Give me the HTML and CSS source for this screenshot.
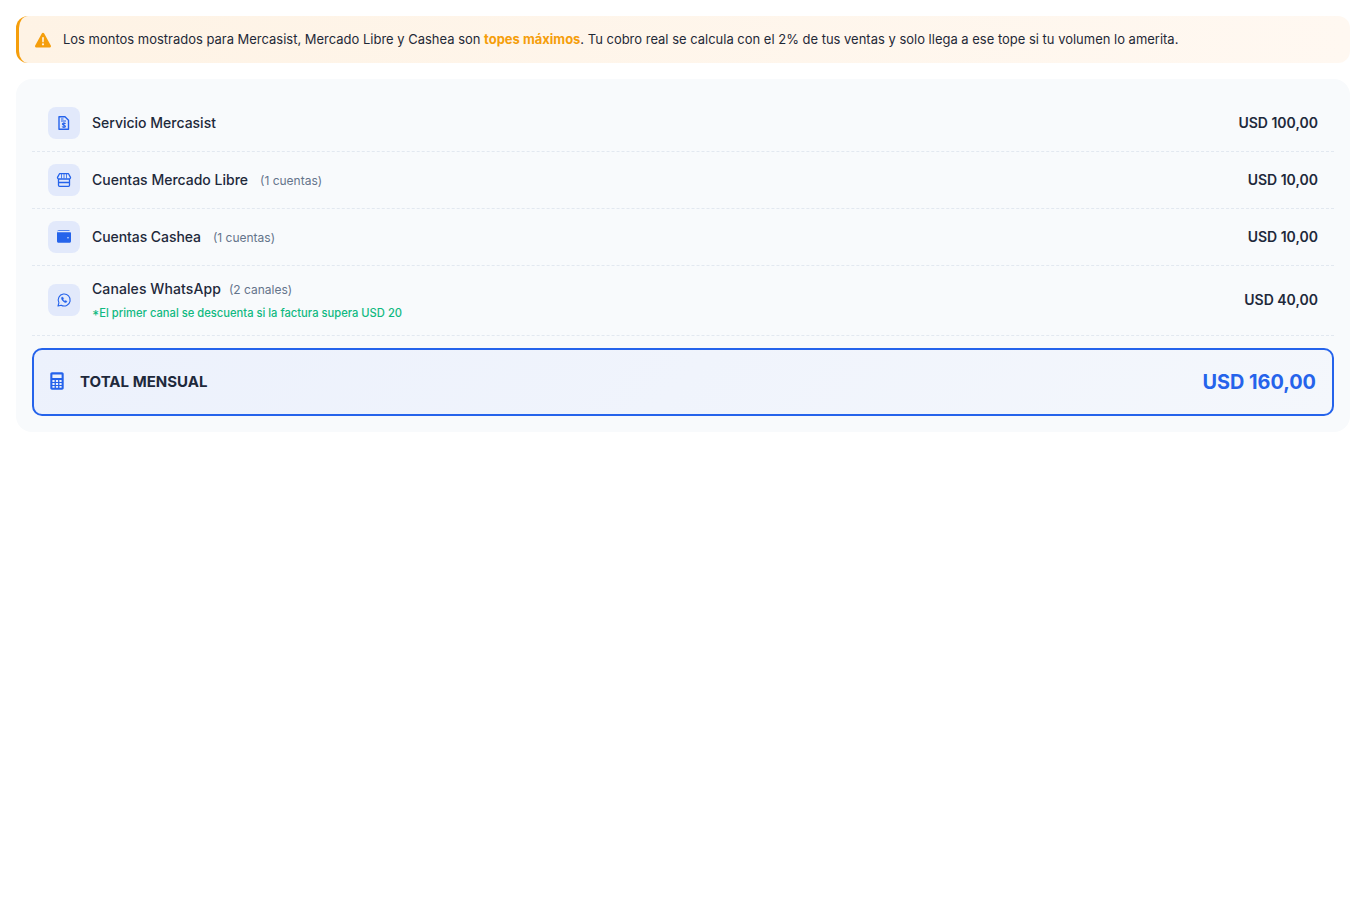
FILE: index.html
```html
<!DOCTYPE html>
<html lang="es">
<head>
<meta charset="utf-8">
<title>Resumen mensual</title>
<link rel="stylesheet" href="styles.css">
</head>
<body>
<div class="alert">
  <svg class="alert-icon" viewBox="0 0 16 16" aria-hidden="true"><path fill-rule="evenodd" d="M8 .8c.5 0 1 .3 1.200.7l6.600 12c.5.9-.1 1.900-1.200 1.900H1.400C.3 15.400-.3 14.400.2 13.500l6.600-12C7 1.100 7.500.8 8 .8zM7.100 5.300l.2 5h1.400l.2-5H7.100zM8 11.200a1.100 1.100 0 1 0 0 2.200 1.100 1.100 0 0 0 0-2.200z"/></svg>
  <p class="alert-text">Los montos mostrados para Mercasist, Mercado Libre y Cashea son <strong>topes máximos</strong>. Tu cobro real se calcula con el 2% de tus ventas y solo llega a ese tope si tu volumen lo amerita.</p>
</div>
<section class="card">
  <div class="row">
    <div class="row-left">
      <span class="icon-box"><svg viewBox="0 0 16 16" fill="none" stroke="currentColor" stroke-width="1.400"><path d="M3 1.700h6l3.500 3.500v9.100H3z" stroke-linejoin="round"/><path d="M5 4h2.500M5 6h5" stroke-width="1"/><path d="M9.600 8.800c-.3-.5-.9-.7-1.700-.7-.9 0-1.500.4-1.500 1s.6.900 1.500 1.100 1.600.5 1.600 1.100-.6 1-1.600 1c-.9 0-1.500-.3-1.800-.8M7.900 7.200v5.900" stroke-width="1.100"/></svg></span>
      <span class="name">Servicio Mercasist</span>
    </div>
    <span class="amount">USD 100,00</span>
  </div>
  <div class="row">
    <div class="row-left">
      <span class="icon-box"><svg viewBox="0 0 16 16" fill="none" stroke="currentColor" stroke-width="1.300" stroke-linejoin="round"><path d="M3.500 1.700h9l2 3.700c0 1-.8 1.600-1.700 1.600H3.200c-.9 0-1.700-.6-1.700-1.600z"/><path d="M5.500 2v4.500M8 2v4.500M10.500 2v4.500" stroke-width=".8"/><path d="M2.500 7v6.300c0 .6.400 1 1 1h9c.6 0 1-.4 1-1V7M2.500 10.500h11"/></svg></span>
      <span class="name">Cuentas Mercado Libre</span><span class="count">(1 cuentas)</span>
    </div>
    <span class="amount">USD 10,00</span>
  </div>
  <div class="row">
    <div class="row-left">
      <span class="icon-box"><svg viewBox="0 0 16 16" fill="currentColor"><path d="M2.800 1.200h10c.6 0 1 .3 1.100.9H2.500c-.9 0-1.500.5-1.500 1 0-1.100.7-1.900 1.800-1.900z"/><path fill-rule="evenodd" d="M1 3.200h13c.6 0 1 .4 1 1v8c0 .9-.6 1.500-1.500 1.500h-11c-.9 0-1.500-.6-1.500-1.500zM12 8a.8.800 0 1 0 0 1.600A.8.800 0 0 0 12 8z"/></svg></span>
      <span class="name name-tight">Cuentas Cashea</span><span class="count">(1 cuentas)</span>
    </div>
    <span class="amount">USD 10,00</span>
  </div>
  <div class="row row-tall">
    <div class="row-left">
      <span class="icon-box"><svg viewBox="0 0 16 16" fill="none" stroke="currentColor" stroke-width="1.100"><path d="M2 14l.9-3.200A6 6 0 1 1 5.200 13.200z" stroke-linejoin="round"/><path d="M5.800 5.300c-.5.500-.5 1.300 0 2.200.6 1.200 1.500 2.100 2.700 2.700.9.400 1.700.4 2.200-.1l.3-.7-1.500-.8-.6.600c-.8-.3-1.500-1-1.900-1.900l.6-.6-.7-1.500z" stroke-width=".5" fill="currentColor"/></svg></span>
      <div class="stack">
        <div class="stack-top"><span class="name name-wide">Canales WhatsApp</span><span class="count count-near">(2 canales)</span></div>
        <div class="note">*El primer canal se descuenta si la factura supera USD 20</div>
      </div>
    </div>
    <span class="amount">USD 40,00</span>
  </div>
  <div class="total">
    <div class="total-left">
      <svg class="total-icon" viewBox="0 0 14 18" aria-hidden="true"><path fill="currentColor" fill-rule="evenodd" d="M2 .3h10c1 0 1.700.7 1.700 1.700v14c0 1-.7 1.700-1.700 1.700H2c-1 0-1.700-.7-1.700-1.700V2C.3 1 1 .3 2 .3zM2.400 2.400v3.700h9.200V2.400zM2.400 7.900v2h2.200v-2zm3.500 0v2h2.200v-2zm3.500 0v2h2.200v-2zM2.400 11.100v1.800h2.200v-1.800zm3.500 0v1.800h2.200v-1.800zm3.500 0v1.800h2.200v-1.800zM2.400 14v1.700h2.200V14zm3.500 0v1.700h2.200V14zm3.500 0v1.700h2.200V14z"/></svg>
      <span class="total-label">TOTAL MENSUAL</span>
    </div>
    <span class="total-amount">USD 160,00</span>
  </div>
</section>
</body>
</html>
```
FILE: styles.css
```css
* { box-sizing: border-box; }
html, body { margin: 0; padding: 0; background: #fff; }
body { padding: 16px; font-family: Inter, "Liberation Sans", sans-serif; color: #1f2937; }

.alert {
  display: flex;
  align-items: center;
  gap: 12px;
  height: 47px;
  padding: 0 16px;
  border-left: 3px solid #f59e0b;
  border-radius: 12px;
  background: linear-gradient(90deg, #fef3e5, #fff8f1);
}
.alert-icon { width: 16px; height: 16px; fill: #f59e0b; flex: none; }
.alert-text { margin: 0; padding-bottom: 2px; font-size: 12.96px; letter-spacing: .01px; line-height: 20px; color: #1f2937; }
.alert-text strong { color: #f59e0b; font-weight: 700; }

.card {
  margin-top: 16px;
  padding: 16px;
  background: #f8fafc;
  border-radius: 16px;
}
.row {
  display: flex;
  align-items: center;
  justify-content: space-between;
  padding: 12px 16px;
  border-bottom: 1px dashed #e2e8f0;
}
.row-tall { padding-bottom: 13px; }
.row-left { display: flex; align-items: center; gap: 12px; }
.icon-box {
  display: flex;
  align-items: center;
  justify-content: center;
  width: 32px;
  height: 32px;
  border-radius: 8px;
  background: #e2e9fb;
  color: #2563eb;
  flex: none;
}
.icon-box svg { width: 16px; height: 16px; }
.name { font-size: 14px; line-height: 20px; font-weight: 500; color: #1e293b; }
.name-tight { letter-spacing: -.07px; }
.name-wide { letter-spacing: .09px; }
.count { padding-top: 2px; font-size: 12px; line-height: 20px; color: #64748b; }
.count-near { margin-left: 8px; }
.stack { display: flex; flex-direction: column; }
.stack-top { display: flex; align-items: center; height: 22px; }
.note {
  margin-top: 4px;
  font-size: 11.2px;
  line-height: 18px;
  font-weight: 500;
  font-feature-settings: "case" 1;
  color: #10b981;
}
.amount { font-size: 14px; line-height: 20px; font-weight: 600; color: #1e293b; }

.total {
  display: flex;
  align-items: center;
  justify-content: space-between;
  height: 68px;
  margin-top: 12px;
  padding: 0 16px;
  border: 2px solid #2563eb;
  border-radius: 10px;
  background: linear-gradient(135deg, #ecf1fc, #f4f7fc);
}
.total-left { display: flex; align-items: center; gap: 16px; padding-bottom: 2px; }
.total-icon { width: 14px; height: 18px; color: #2563eb; flex: none; }
.total-label { font-size: 15.04px; font-weight: 700; color: #1e293b; }
.total-amount { font-size: 19.84px; font-weight: 700; color: #2563eb; }
```
